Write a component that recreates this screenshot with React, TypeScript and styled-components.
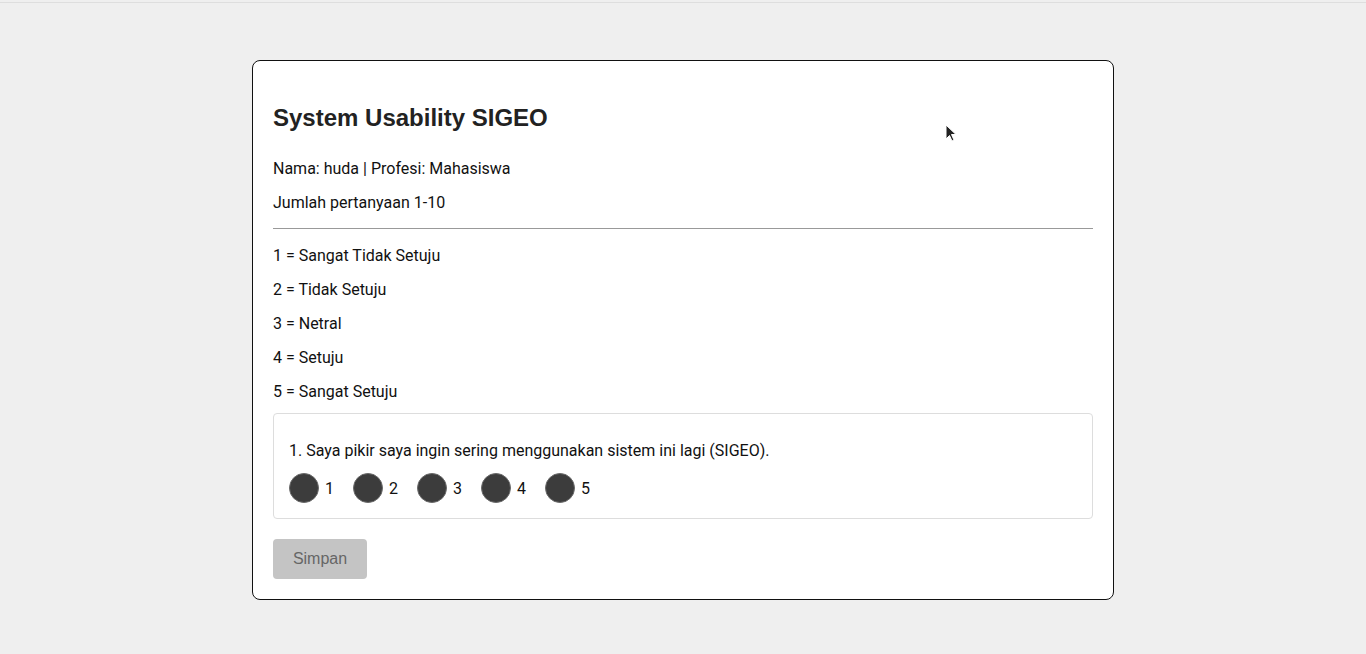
import React from "react";
import styled, { createGlobalStyle } from "styled-components";

const legend = [
    "1 = Sangat Tidak Setuju",
    "2 = Tidak Setuju",
    "3 = Netral",
    "4 = Setuju",
    "5 = Sangat Setuju",
];

export default function App() {
    return (
        <>
            <GlobalStyle />
            <Page>
                <TopRule />
                <Card>
                    <Title>System Usability SIGEO</Title>
                    <Text>Nama: huda | Profesi: Mahasiswa</Text>
                    <Text>Jumlah pertanyaan 1-10</Text>
                    <Divider />
                    {legend.map((item) => (
                        <Text key={item}>{item}</Text>
                    ))}
                    <QuestionBox>
                        <Question>1. Saya pikir saya ingin sering menggunakan sistem ini lagi (SIGEO).</Question>
                        <Options>
                            {[1, 2, 3, 4, 5].map((n) => (
                                <Option key={n}>
                                    <Radio type="radio" name="q1" value={n} />
                                    <span>{n}</span>
                                </Option>
                            ))}
                        </Options>
                    </QuestionBox>
                    <SaveButton disabled>Simpan</SaveButton>
                    <Cursor width="12" height="19" viewBox="0 0 12 19">
                        <path d="M1 1 L1 15 L4.5 11.5 L7 17 L9 16 L6.5 10.5 L11 10.5 Z" fill="#222" stroke="#fff" strokeWidth="1" />
                    </Cursor>
                </Card>
            </Page>
        </>
    );
}

const GlobalStyle = createGlobalStyle`
    html, body {
        margin: 0;
        background: #efefef;
    }
    body {
        font-family: Roboto, "Noto Sans", sans-serif;
        color: #111;
    }
`;

const Page = styled.div`
    min-height: 654px;
    display: flex;
    flex-direction: column;
    align-items: center;
`;

const TopRule = styled.div`
    align-self: stretch;
    height: 1px;
    margin-top: 2px;
    background: #dedede;
`;

const Card = styled.div`
    position: relative;
    width: 820px;
    margin-top: 57px;
    padding: 20px;
    background: #fff;
    border: 1px solid #111;
    border-radius: 8px;
`;

const Title = styled.h2`
    margin: 23px 0 28px;
    font-family: "Liberation Sans", Arial, sans-serif;
    font-size: 24px;
    font-weight: 700;
    line-height: 28px;
    color: #222;
`;

const Text = styled.p`
    margin: 16px 0 12px;
    font-size: 16px;
    line-height: 18px;
`;

const Divider = styled.hr`
    margin: 16px 0 18px;
    border: none;
    border-top: 1px solid #999;
`;

const QuestionBox = styled.div`
    margin-top: 12px;
    padding: 15px;
    border: 1px solid #ddd;
    border-radius: 4px;
`;

const Question = styled.p`
    margin: 13px 0 0;
    font-size: 16px;
    line-height: 18px;
`;

const Options = styled.div`
    display: flex;
    margin-top: 13px;
`;

const Option = styled.label`
    display: flex;
    align-items: center;
    gap: 6px;
    width: 64px;
    font-size: 16px;
`;

const Radio = styled.input`
    appearance: none;
    margin: 0;
    width: 30px;
    height: 30px;
    border-radius: 50%;
    background: #3c3c3c;
    border: 1px solid #6a6a6a;
`;

const SaveButton = styled.button`
    display: block;
    margin-top: 20px;
    width: 94px;
    height: 40px;
    border: none;
    border-radius: 4px;
    background: #c4c4c4;
    color: #666;
    font-family: "Liberation Sans", Arial, sans-serif;
    font-size: 16px;
`;

const Cursor = styled.svg`
    position: absolute;
    left: 692px;
    top: 63px;
`;
